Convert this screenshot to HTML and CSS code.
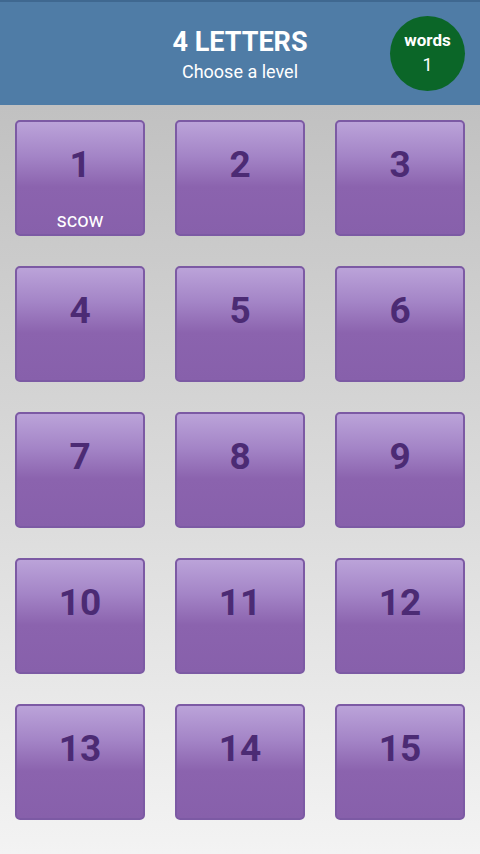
FILE: index.html
```html
<!DOCTYPE html>
<html lang="en">
<head>
    <meta charset="UTF-8">
    <meta name="viewport" content="width=device-width, initial-scale=1.0">
    <title>4 Letters</title>
    <link rel="stylesheet" href="styles.css">
</head>
<body>
    <header class="topbar">
        <div class="spacer"></div>
        <div class="heading">
            <div class="title">4 LETTERS</div>
            <div class="subtitle">Choose a level</div>
        </div>
        <div class="badge">
            <span class="badge-label">words</span>
            <span class="badge-count">1</span>
        </div>
    </header>
    <main class="levels">
        <div class="level"><span class="num">1</span><span class="word">scow</span></div>
        <div class="level"><span class="num">2</span></div>
        <div class="level"><span class="num">3</span></div>
        <div class="level"><span class="num">4</span></div>
        <div class="level"><span class="num">5</span></div>
        <div class="level"><span class="num">6</span></div>
        <div class="level"><span class="num">7</span></div>
        <div class="level"><span class="num">8</span></div>
        <div class="level"><span class="num">9</span></div>
        <div class="level"><span class="num">10</span></div>
        <div class="level"><span class="num">11</span></div>
        <div class="level"><span class="num">12</span></div>
        <div class="level"><span class="num">13</span></div>
        <div class="level"><span class="num">14</span></div>
        <div class="level"><span class="num">15</span></div>
    </main>
</body>
</html>
```

FILE: styles.css
```css
html, body
{
    margin: 0;
    height: 100%;
}
body
{
    font-family: Roboto, "Liberation Sans", sans-serif;
    background: linear-gradient(to bottom, #bababa 0%, #d6d6d6 50%, #f3f3f3 100%);
}
.topbar
{
    box-sizing: border-box;
    height: 105px;
    border-top: 2px solid #3f6890;
    background-color: #4f7ca6;
    display: grid;
    grid-template-columns: 1fr auto 1fr;
    align-items: center;
    color: white;
}
.heading
{
    text-align: center;
    align-self: start;
    padding-top: 24px;
}
.title
{
    font-size: 27px;
    font-weight: bold;
    line-height: 32px;
}
.subtitle
{
    font-size: 18px;
    line-height: 22px;
    margin-top: 3px;
}
.badge
{
    justify-self: end;
    margin-right: 15px;
    margin-top: -1px;
    width: 75px;
    height: 75px;
    border-radius: 50%;
    background-color: #0b6628;
    display: flex;
    flex-direction: column;
    align-items: center;
    justify-content: center;
}
.badge-label
{
    font-size: 17px;
    font-weight: bold;
    line-height: 22px;
    margin-top: -2px;
}
.badge-count
{
    font-size: 18px;
    line-height: 22px;
    margin-top: 3px;
}
.levels
{
    display: grid;
    grid-template-columns: repeat(3, 130px);
    column-gap: 30px;
    row-gap: 30px;
    padding: 15px 15px 0;
}
.level
{
    box-sizing: border-box;
    height: 116px;
    border: 2px solid #7c5aa4;
    border-radius: 5px;
    background: linear-gradient(to bottom, #bba3d9 0%, #a485c7 30%, #8b63ae 58%, #8760ab 100%);
    display: flex;
    flex-direction: column;
    align-items: center;
    padding: 25px 0 4px;
}
.num
{
    font-size: 37px;
    font-weight: bold;
    line-height: 36px;
    color: #4c2b74;
}
.word
{
    margin-top: auto;
    font-size: 20px;
    line-height: 20px;
    color: white;
}
```
